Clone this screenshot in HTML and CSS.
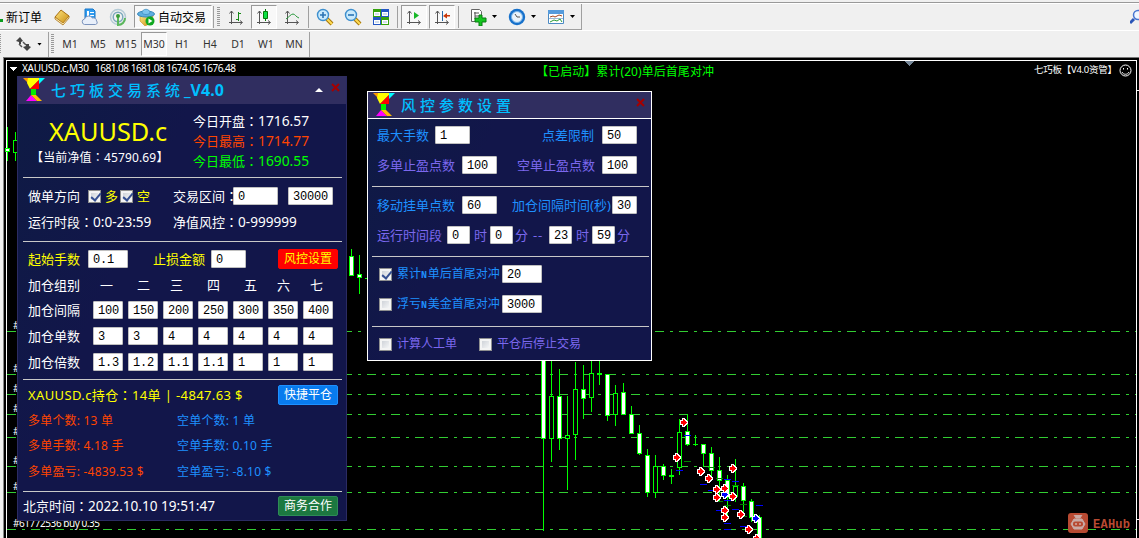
FILE: index.html
```
<!DOCTYPE html>
<html lang="zh-CN">

<head>
    <meta charset="UTF-8">
    <meta name="viewport" content="width=device-width, initial-scale=1.0">
    <title>七巧板交易系统</title>
    <link rel="stylesheet" href="styles.css">
</head>

<body>
    <svg width="0" height="0" class="defs">
        <defs>
            <symbol id="logo" viewBox="0 0 22 24">
                <path d="M0 0h5v5z" fill="#f90" />
                <path d="M5 0h11v2L7 11 4 5z" fill="#ff0" />
                <path d="M16 0h6l-6 6z" fill="#0ff" />
                <path d="M16 2v9H7z" fill="red" />
                <path d="M8 11h5v6H8z" fill="#0e0" />
                <path d="M8 17l6 6H3z" fill="#f0f" />
                <path d="M8 17h5l6 6h-5z" fill="#fb0" />
            </symbol>
            <symbol id="axes" viewBox="0 0 18 18">
                <path d="M4.500 3v13M2 14.500h13M2.500 5.500l2-2.500 2 2.500M13 12.500l2.500 2-2.500 2" fill="none" stroke="#555" />
            </symbol>
            <symbol id="arrow" viewBox="0 0 9 9" overflow="visible">
                <path d="M1 3h2V1h1v1h1v1h1v1h1v1H6v1H5v1H4v1H3V6H1z" stroke="#fff" stroke-width="2" />
                <path d="M1 3h2V1h1v1h1v1h1v1h1v1H6v1H5v1H4v1H3V6H1z" />
            </symbol>
            <linearGradient id="gold" x2="1" y2="1">
                <stop stop-color="#ffe680" />
                <stop offset="1" stop-color="#c78a10" />
            </linearGradient>
        </defs>
    </svg>

    <header class="toolbars">
        <div class="toolbar main-bar">
            <span class="new-order"><i></i>新订单</span>
            <span class="slot"><svg width="18" height="18"><path d="M2 9l6-7 8 6-6 8z" fill="url(#gold)" stroke="#a86f10" /><path d="M2 9v2l8 6 6-7V8l-6 7z" fill="#fff0b8" stroke="#a86f10" stroke-width=".8" /></svg></span>
            <span class="slot"><svg width="18" height="18"><path d="M4 1h8l2 2v9H4z" fill="#2f9cf0" stroke="#1976c8" /><path d="M6 3h2v7H6zM9 4h4v1H9zM9 7h4v1H9z" fill="#fff" /><path d="M3.500 16.500a2.800 2.800 0 0 1 0-5.500 4.500 4.500 0 0 1 8-1 3 3 0 0 1 4 3 2 2 0 0 1-1 3.500z" fill="#e8effa" stroke="#7b93bd" /></svg></span>
            <span class="slot"><svg width="18" height="18" fill="none"><circle cx="9" cy="9" r="7.500" stroke="#b5cbd6" stroke-width="1.500" /><circle cx="9" cy="9" r="4.800" stroke="#7ba8bd" stroke-width="1.500" /><path d="M9 8v9c4 0 7-3 7-7" stroke="#5cb85c" stroke-width="2" /><circle cx="9" cy="8" r="2" fill="#3a9c3a" /></svg></span>
            <span class="auto pressed"><svg width="18" height="18"><path d="M3 8h13l-2 7-6 3-5-5z" fill="url(#gold)" stroke="#c89520" stroke-width=".6" /><ellipse cx="9" cy="6" rx="8.500" ry="3" fill="#5eaee0" stroke="#3989ba" /><path d="M5 5c0-5 8-5 8 0-2 2-6 2-8 0z" fill="#7cc4ef" stroke="#3989ba" stroke-width=".7" /><circle cx="13" cy="13" r="4.500" fill="#10a820" /><path d="M11.500 10.500v5l4-2.500z" fill="#fff" /></svg>自动交易</span>
            <span class="sep"></span><span class="grip"></span>
            <span class="slot"><svg width="18" height="18"><use href="#axes" /><path d="M11.500 4v9M9 11.500h2M12 5.500h2" stroke="#178a17" /></svg></span>
            <span class="slot pressed"><svg width="18" height="18"><use href="#axes" /><path d="M10.500 1v12" stroke="#087a08" /><path d="M8.500 3.500h4v7h-4z" fill="#0be043" stroke="#087a08" /></svg></span>
            <span class="slot"><svg width="18" height="18"><use href="#axes" /><path d="M3 11c3-2 5-5 7-5s3 3 6 4" fill="none" stroke="#28983c" /></svg></span>
            <span class="sep"></span>
            <span class="slot"><svg width="18" height="18"><path d="M11 11l5 5" stroke="#a97809" stroke-width="4" /><path d="M11 11l5 5" stroke="#ffdc54" stroke-width="2" /><circle cx="7" cy="7" r="5.500" fill="#c9eafc" stroke="#3e8fce" stroke-width="1.400" /><path d="M4 7h6M7 4v6" stroke="#2b74b4" stroke-width="1.600" /></svg></span>
            <span class="slot"><svg width="18" height="18"><path d="M11 11l5 5" stroke="#a97809" stroke-width="4" /><path d="M11 11l5 5" stroke="#ffdc54" stroke-width="2" /><circle cx="7" cy="7" r="5.500" fill="#c9eafc" stroke="#3e8fce" stroke-width="1.400" /><path d="M4 7h6" stroke="#2b74b4" stroke-width="1.600" /></svg></span>
            <span class="slot"><svg width="18" height="18"><path d="M1 1h8v8H1zM9 9h8v8H9z" fill="#36a30e" /><path d="M9 1h8v8H9zM1 9h8v8H1z" fill="#2457c4" /><path d="M2 4h6v4H2zM10 4h6v4h-6zM2 12h6v4H2zM10 12h6v4h-6z" fill="#fff" /><path d="M3 6h4M11 6h4M3 14h4M11 14h4" stroke="#a4bddb" /></svg></span>
            <span class="sep"></span>
            <span class="slot pressed"><svg width="18" height="18"><use href="#axes" /><path d="M9 4v7l5-3.500z" fill="#18b828" /></svg></span>
            <span class="slot pressed"><svg width="18" height="18"><use href="#axes" /><path d="M9.500 3v10" stroke="#2467a8" /><path d="M10 8l4-3v2h3v1.500h-3v2z" fill="#c8370a" /></svg></span>
            <span class="sep"></span>
            <span class="slot menu"><svg width="18" height="18"><path d="M2.500 1.500h8l2 2v10h-10z" fill="#fff" stroke="#666" /><path d="M5 5h5M6 8h4M6 4v7" stroke="#555" /><path d="M10 7h3v3h4v4h-4v4h-3v-4H6v-4h4z" fill="#15c51f" stroke="#087a13" /></svg></span><i class="down"></i>
            <span class="slot"><svg width="18" height="18"><circle cx="9" cy="9" r="8.200" fill="#1771cb" /><circle cx="9" cy="9" r="5.500" fill="#e9f3fb" stroke="#78b4ea" /><path d="M7 6l2 3h3" fill="none" stroke="#555" /></svg></span><i class="down"></i>
            <span class="slot"><svg width="18" height="18"><path d="M1.500 2.500h15v13h-15z" fill="#fff" stroke="#4c8ac3" /><path d="M1 2h16v4H1z" fill="#559bdc" /><path d="M3 9l3-1 2 1 4-2 3 1" fill="none" stroke="#a5441d" /><path d="M2 10.500h14" stroke="#9dbbd5" /><path d="M3 14l4-2 3 1 3-2 2 3" fill="none" stroke="#2c9c36" /></svg></span><i class="down"></i>
            <svg class="search" width="9" height="16"><path d="M0 14l4-4" stroke="#2a55b8" stroke-width="3" /><circle cx="8" cy="6" r="4.500" fill="#eef6ff" stroke="#4775d1" stroke-width="1.500" /></svg>
        </div>
        <div class="toolbar period-bar">
            <span class="grip first"></span>
            <svg class="cursor" width="18" height="16"><path d="M1 5l4-4 3 4-2 1v2H4V6zM8 11l4 4 4-4-2-1V8h-3v2z" fill="#444" /><path d="M4 8l3 3M8 6l3 3" stroke="#555" stroke-width="1.500" /></svg><i class="down"></i>
            <span class="sep"></span><span class="grip"></span>
            <span class="slot">M1</span><span class="slot">M5</span><span class="slot">M15</span><span class="slot pressed">M30</span><span class="slot">H1</span><span class="slot">H4</span><span class="slot">D1</span><span class="slot">W1</span><span class="slot">MN</span>
            <span class="sep last"></span>
        </div>
    </header>

    <main class="workspace">
        <svg id="chart" class="chart" width="1139" height="481" viewBox="0 57 1139 481" shape-rendering="crispEdges">
            <rect x="3" y="57" width="1136" height="1" fill="#777" />
            <rect x="4" y="58" width="1135" height="480" />
            <rect x="3" y="58" width="1" height="480" fill="#888" />
            <path d="M6.500 538V60.500H1136.500V538M1137 90.500h2M1137 519.500h2" stroke="#fff" fill="none" />
            <g id="levels"></g>
            <g id="candles"></g>
            <g id="trades"></g>
            <path d="M904 61h10l-5 5z" fill="#778899" />
            <path d="M9 67h8l-4 4z" fill="#fff" />
            <g class="chart-text" shape-rendering="auto">
                <text x="22" y="72" textLength="67">XAUUSD.c,M30</text>
                <text x="95" y="72" textLength="141">1681.08 1681.08 1674.05 1676.48</text>
                <text x="13" y="527" textLength="87">#61772536 buy 0.35</text>
                <text x="1034" y="73" textLength="83" class="expert">七巧板【V4.0资管】</text>
                <text x="536" y="76" textLength="178" class="running">【已启动】累计(20)单后首尾对冲</text>
                <g fill="none" stroke="#fff"><circle cx="1125.500" cy="70.500" r="5.500" /><path d="M1122 72c1 3 6 3 7 0M1123.500 68v1.500M1127.500 68v1.500" /></g>
            </g>
            <g shape-rendering="auto">
                <rect x="1068" y="513" width="20" height="20" rx="3" fill="#b84a32" />
                <path d="M1074 515l2 3h4l2-3M1071 524l3-5h8l3 5-3 5h-8z" fill="#c9aaa5" stroke="#c9aaa5" />
                <rect x="1073" y="521.500" width="10" height="5" rx="2" fill="#b84a32" />
                <path d="M1076 523v2M1080 523v2" stroke="#ddd" />
                <text x="1093" y="528" textLength="37" class="brand">EAHub</text>
            </g>
        </svg>

        <section class="panel trade">
            <div class="panel-head">
                <svg width="22" height="24"><use href="#logo" /></svg>
                <h2>七巧板交易系统<b>_V4.0</b></h2>
                <i class="up"></i>
                <svg class="close" width="9" height="9"><path d="M1 1l7 7M8 1L1 8" /></svg>
            </div>
            <div class="summary">
                <div class="symbol">
                    <div class="name">XAUUSD.c</div>
                    <div class="equity">【当前净值<i class="colon" lang="zh-TW">：</i>45790.69】</div>
                </div>
                <div class="prices">
                    <p>今日开盘<i class="colon" lang="zh-TW">：</i><b>1716.57</b></p>
                    <p class="orange">今日最高<i class="colon" lang="zh-TW">：</i><b>1714.77</b></p>
                    <p class="lime">今日最低<i class="colon" lang="zh-TW">：</i><b>1690.55</b></p>
                </div>
            </div>
            <div class="group g1">
                <div class="row direction"><span>做单方向</span><i class="check on"></i><span class="yellow">多</span><i class="check on"></i><span class="yellow">空</span><span>交易区间<i class="colon" lang="zh-TW">：</i></span><input value="0"><input value="30000"></div>
                <div class="row times"><span>运行时段<i class="colon" lang="zh-TW">：</i><b>0:0-23:59</b></span><span>净值风控<i class="colon" lang="zh-TW">：</i><b>0-999999</b></span></div>
            </div>
            <div class="group g2">
                <div class="row start"><span class="yellow">起始手数</span><input value="0.1"><span class="yellow">止损金额</span><input value="0"><button class="red">风控设置</button></div>
                <div class="row steps heads"><span>加仓组别</span><em>一</em><em>二</em><em>三</em><em>四</em><em>五</em><em>六</em><em>七</em></div>
                <div class="row steps"><span>加仓间隔</span><input value="100"><input value="150"><input value="200"><input value="250"><input value="300"><input value="350"><input value="400"></div>
                <div class="row steps"><span>加仓单数</span><input value="3"><input value="3"><input value="4"><input value="4"><input value="4"><input value="4"><input value="4"></div>
                <div class="row steps"><span>加仓倍数</span><input value="1.3"><input value="1.2"><input value="1.1"><input value="1.1"><input value="1"><input value="1"><input value="1"></div>
            </div>
            <div class="group g3">
                <div class="row position"><span class="yellow">XAUUSD.c持仓<i class="colon" lang="zh-TW">：</i>14单 | -4847.63 $</span><button class="blue">快捷平仓</button></div>
                <div class="row pair"><span>多单个数: 13 单</span><span>空单个数: 1 单</span></div>
                <div class="row pair"><span>多单手数: 4.18 手</span><span>空单手数: 0.10 手</span></div>
                <div class="row pair"><span>多单盈亏: -4839.53 $</span><span>空单盈亏: -8.10 $</span></div>
            </div>
            <div class="group g4">
                <div class="row clock"><span>北京时间<i class="colon" lang="zh-TW">：</i><b>2022.10.10 19:51:47</b></span><button class="green">商务合作</button></div>
            </div>
        </section>

        <section class="panel risk">
            <div class="panel-head">
                <svg width="22" height="24"><use href="#logo" /></svg>
                <h2>风控参数设置</h2>
                <svg class="close" width="9" height="9"><path d="M1 1l7 7M8 1L1 8" /></svg>
            </div>
            <div class="group">
                <div class="row r1"><span>最大手数</span><input value="1"><span>点差限制</span><input value="50"></div>
                <div class="row r2 violet"><span>多单止盈点数</span><input value="100"><span>空单止盈点数</span><input value="100"></div>
            </div>
            <div class="group">
                <div class="row r3"><span>移动挂单点数</span><input value="60"><span>加仓间隔时间(秒)</span><input value="30"></div>
                <div class="row r4 violet"><span>运行时间段</span><input value="0"><span>时</span><input value="0"><span class="dash">分 --</span><input value="23"><span>时</span><input value="59"><span>分</span></div>
            </div>
            <div class="group opts">
                <div class="row r5"><i class="check on"></i><span>累计<small>N</small>单后首尾对冲</span><input value="20"></div>
                <div class="row r5"><i class="check"></i><span>浮亏<small>N</small>美金首尾对冲</span><input value="3000"></div>
            </div>
            <div class="group last">
                <div class="row r6 violet"><i class="check"></i><span>计算人工单</span><i class="check"></i><span>平仓后停止交易</span></div>
            </div>
        </section>
    </main>

    <script src="chart.js"></script>
</body>

</html>
```
FILE: styles.css
```
* {
    box-sizing: border-box;
}

body {
    margin: 0;
    width: 1139px;
    height: 538px;
    overflow: hidden;
    background: #f0f0f0;
    font-family: "Noto Sans", "Noto Sans CJK SC", sans-serif;
}

i, em, b {
    font-style: normal;
    font-weight: normal;
}

svg {
    display: block;
    flex: none;
}

.defs {
    position: absolute;
}

/* 工具栏 */
.toolbars {
    height: 57px;
    padding-top: 2px;
}

.toolbar {
    display: flex;
    align-items: center;
}

.main-bar {
    height: 29px;
    border-top: 1px solid #999;
    border-bottom: 1px solid #fff;
    box-shadow: inset 0 1px #fff;
    background: linear-gradient(#a0a0a0, #a0a0a0) 0 26px / 581px 1px no-repeat, linear-gradient(#a0a0a0, #a0a0a0) 581px 1px / 1px 26px no-repeat;
}

.period-bar {
    height: 26px;
    font-size: 10.5px;
    color: #333;
}

.slot {
    width: 28px;
    height: 24px;
    flex: none;
    display: flex;
    align-items: center;
    justify-content: center;
}

.pressed {
    background: #f8f8f8;
    border: 1px solid #fff;
    border-top-color: #999;
    border-left-color: #999;
}

.slot.pressed {
    width: 26px;
    margin: 0 1px;
}

.new-order {
    width: 48px;
    display: flex;
    align-items: center;
    font-size: 12px;
    white-space: nowrap;
}

.new-order i {
    width: 3px;
    height: 3px;
    margin: 8px 3px 0 0;
    background: #0a9c1c;
}

.auto {
    width: 78px;
    height: 23px;
    margin: 0 0 0 2px;
    padding-left: 2px;
    display: flex;
    align-items: center;
    gap: 3px;
    font-size: 12px;
    white-space: nowrap;
}

.sep {
    width: 1px;
    height: 22px;
    margin: 0 2px;
    background: #a0a0a0;
}

.grip {
    width: 3px;
    height: 20px;
    margin-right: 4px;
    background: repeating-linear-gradient(#999 0 1px, #f0f0f0 1px 2px);
}

.main-bar .slot + .sep {
    margin: 0 2px 0 2px;
}

.main-bar .auto + .sep {
    margin: 0 3px 0 1px;
}

.main-bar .grip {
    margin-right: 2px;
}

.slot.menu {
    margin-left: 3px;
}

.down {
    width: 5px;
    height: 3px;
    flex: none;
    margin-right: 5px;
    background: #000;
    clip-path: polygon(0 0, 100% 0, 50% 100%);
}

.main-bar .down {
    margin: 0 6px 0 0;
}

.search {
    margin-left: auto;
}

.grip.first {
    width: 1px;
    margin: 0;
}

.cursor {
    margin: 0 4px 0 14px;
}

.period-bar .sep {
    height: 25px;
    margin: 0 2px 0 1px;
}

.period-bar .grip:not(.first) {
    margin-right: 2px;
}

.period-bar .sep.last {
    margin-left: 1px;
}

/* 图表 */
.workspace {
    position: relative;
    height: 481px;
}

.chart-text text {
    font-size: 10px;
    fill: #fff;
}

.chart-text .running {
    font-size: 12px;
    fill: #0f0;
}

.chart-text .expert {
    font-size: 9.5px;
}

.brand {
    font: bold 12px "Liberation Mono", monospace;
    fill: #b84a32;
}

/* 浮动面板 */
.panel {
    position: absolute;
    color: #fff;
    font-size: 13px;
    line-height: 20px;
    background: linear-gradient(115deg, #0e1b44, #12164a 35%);
}

.trade {
    left: 17px;
    top: 19px;
    width: 330px;
    height: 445px;
    border: 1px solid #2b2b62;
    border-top: 0;
}

.risk {
    left: 367px;
    top: 34px;
    width: 285px;
    height: 270px;
    border: 1px solid #fff;
    color: #1e90ff;
}

.panel-head {
    display: flex;
    align-items: center;
    height: 28px;
    padding-left: 5px;
    background: #302e60;
}

.panel-head h2 {
    flex: 1;
    margin: 0 0 0 6px;
    font-size: 15px;
    line-height: 20px;
    letter-spacing: 4px;
    font-weight: 500;
    color: #00bfff;
    white-space: nowrap;
}

.panel-head b {
    font-size: 16px;
    font-weight: bold;
    letter-spacing: 0;
}

.up {
    width: 8px;
    height: 4px;
    margin-right: 8px;
    background: #fff;
    clip-path: polygon(50% 0, 100% 100%, 0 100%);
}

.close {
    margin: 0 6px 5px 0;
    fill: none;
    stroke: #a40000;
    stroke-width: 2;
}

.risk .panel-head {
    height: 27px;
    border-bottom: 1px solid #fff;
}

/* 冒号居中 */
.colon {
    font-family: "Noto Sans CJK TC", sans-serif;
    line-height: 1;
}

.summary {
    display: flex;
    height: 74px;
    margin: 0 4px 0 5px;
    border-bottom: 1px solid #c8c8c8;
}

.symbol {
    width: 170px;
}

.name {
    margin: 13px 0 0 26px;
    font-size: 25.3px;
    line-height: 28px;
    color: #ff0;
}

.equity {
    margin: 3px 0 0 8px;
    font-size: 12px;
    letter-spacing: 0.15px;
    white-space: nowrap;
}

.prices {
    padding-top: 7px;
}

.prices p {
    margin: 0;
    height: 20px;
}

.row b {
    font-size: 13.6px;
}

.prices b {
    font-size: 13.8px;
}

.orange {
    color: #ff4500;
}

.lime {
    color: #0f0;
}

.yellow {
    color: #ff0;
}

.violet {
    color: #7b68ee;
}

.group {
    margin: 0 4px 0 5px;
    border-bottom: 1px solid #c8c8c8;
}

.row {
    display: grid;
    align-items: center;
    height: 26px;
    padding-left: 5px;
    white-space: nowrap;
}

.g1 {
    height: 64px;
    padding-top: 5px;
}

.g2 {
    height: 138px;
    padding-top: 4px;
}

.g3 {
    height: 112px;
    padding-top: 2px;
}

.g4 {
    border: 0;
    padding-top: 1px;
}

.direction {
    grid-template-columns: 60px 17px 15px 17px 36px 60px 55px 45px;
}

.times {
    grid-template-columns: 145px auto;
}

.start {
    grid-template-columns: 60px 65px 58px 67px 60px;
}

.start input {
    width: 40px;
}

.start input:nth-of-type(2) {
    width: 35px;
}

.steps {
    grid-template-columns: 65px repeat(7, 35px);
}

.steps.heads {
    height: 25px;
    grid-template-columns: 65px 37px 33px 37px 37px 33px 33px 35px;
}

.steps em {
    padding-left: 7px;
}

.steps input {
    width: 30px;
}

.position {
    grid-template-columns: 250px 60px;
}

.position span {
    letter-spacing: 0.38px;
}

.pair {
    grid-template-columns: 149px auto;
    font-size: 12px;
    letter-spacing: 0.2px;
}

.position + .pair {
    height: 25px;
}

.pair span:first-child {
    color: #ff4500;
}

.pair span:last-child {
    color: #1e90ff;
}

.clock {
    padding-left: 0;
    grid-template-columns: 255px 60px;
}

input {
    width: 35px;
    height: 18px;
    padding: 2px 0 0 4px;
    border: 1px solid #c0c0c0;
    border-radius: 1px;
    background: #fff;
    color: #000;
    font: 12px "Liberation Mono", monospace;
    letter-spacing: -0.2px;
}

.direction input {
    width: 45px;
}

button {
    width: 60px;
    height: 20px;
    padding: 0;
    border: 1px solid;
    border-radius: 2px;
    color: #fff;
    font: 12px/18px "Noto Sans", "Noto Sans CJK SC", sans-serif;
}

.red {
    background: #f00;
    border-color: #f00;
    color: #ff0;
}

.blue {
    background: #087bee;
    border-color: #1e90ff;
}

.green {
    background: #1c7840;
    border-color: #2e8b57;
}

.check {
    position: relative;
    width: 13px;
    height: 13px;
    border: 1px solid #8e8f8f;
    background: linear-gradient(135deg, #c4c9d0, #fff);
    box-shadow: inset 0 0 0 2px #f4f4f4;
}

.check.on::after {
    content: "";
    position: absolute;
    left: 4px;
    top: 0;
    width: 4px;
    height: 8px;
    border: solid #354f91;
    border-width: 0 2px 2px 0;
    transform: rotate(40deg);
}

/* 风控面板 */
.risk .group {
    height: 68px;
    margin: 0 2px 0 4px;
    padding-top: 1px;
}

.risk .group + .group {
    height: 70px;
    padding-top: 3px;
}

.risk .group.opts {
    padding-top: 2px;
}

.risk .group.last {
    height: auto;
    border: 0;
    padding-top: 2px;
}

.risk .row {
    height: 30px;
}

.r1 {
    grid-template-columns: 58px 107px 60px 35px;
}

.r2 {
    grid-template-columns: 85px 55px 85px 35px;
}

.r3 {
    grid-template-columns: 85px 50px 100px 25px;
}

.r3 input:last-child {
    width: 25px;
}

.r4 {
    grid-template-columns: 70px 27px 16px 25px 34px 27px 16px 25px auto;
}

.r4 input {
    width: 23px;
}

.r4 .dash {
    letter-spacing: 0.8px;
}

.r5 {
    font-size: 12px;
    grid-template-columns: 18px 105px 40px;
}

.risk .r5, .risk .r6 {
    padding-left: 7px;
}

.r5 small {
    font: bold 10px "Liberation Mono", monospace;
    letter-spacing: 0.8px;
}

.r5 input {
    width: 40px;
}

.r6 {
    font-size: 12px;
    grid-template-columns: 18px 82px 18px auto;
}
```
FILE: chart.js
```
const NS = 'http://www.w3.org/2000/svg';

function add(parent, tag, attrs) {
    const el = document.createElementNS(NS, tag);
    for (const k in attrs) el.setAttribute(k, attrs[k]);
    document.getElementById(parent).appendChild(el);
    return el;
}

const levels = [331, 374, 394, 414, 437, 466, 492, 529];
levels.forEach(y => {
    add('levels', 'path', { d: `M7 ${y + 0.5}H1136`, stroke: '#32cd32', 'stroke-dasharray': '9 6 3 6' });
    if (y < 529) {
        const t = add('levels', 'text', { x: 13, y: y - 2, fill: '#fff', 'font-size': 10 });
        t.textContent = '#';
    }
});

// x, 最高, 最低, 实体上沿, 实体下沿, 是否阴线
const candles = [
    [7, 127, 161, 148, 152, 1], [15, 132, 161, 140, 153, 0],
    [351, 249, 276, 256, 276, 1], [359, 255, 294, 274, 278, 1], [367, 278, 279, 278, 279, 0],
    [543, 360, 531, 360, 439, 1], [551, 360, 462, 396, 439, 0], [559, 369, 450, 396, 439, 1],
    [567, 396, 490, 435, 439, 0], [575, 362, 460, 389, 435, 0], [583, 365, 419, 389, 399, 1],
    [591, 360, 412, 373, 398, 0], [599, 360, 385, 373, 375, 0], [607, 374, 421, 374, 416, 1],
    [615, 385, 426, 393, 415, 0], [623, 383, 415, 392, 415, 1], [631, 406, 434, 414, 434, 1],
    [639, 425, 455, 433, 454, 1], [647, 449, 497, 455, 493, 1], [655, 455, 498, 466, 493, 0],
    [663, 464, 480, 466, 476, 1], [671, 469, 484, 475, 477, 0], [679, 419, 475, 432, 468, 0],
    [687, 414, 446, 431, 445, 1], [695, 435, 446, 444, 445, 0], [703, 444, 467, 444, 454, 1],
    [711, 447, 478, 453, 471, 1], [719, 457, 502, 470, 481, 1], [727, 475, 515, 480, 498, 1],
    [735, 459, 502, 486, 497, 0], [743, 483, 515, 486, 501, 1], [751, 499, 522, 501, 518, 1],
    [759, 515, 540, 517, 540, 1]
];
candles.forEach(([x, high, low, top, bottom, down]) => {
    add('candles', 'rect', { x: x, y: high, width: 1, height: low - high, fill: '#0f0' });
    add('candles', 'rect', { x: x - 2, y: top, width: 5, height: bottom - top, fill: '#0f0' });
    if (bottom - top > 2) {
        add('candles', 'rect', { x: x - 1, y: top + 1, width: 3, height: bottom - top - 2, fill: down ? '#fff' : '#000' });
    }
});

const marks = {
    '#00f': [[679, 470], [687, 435], [703, 484], [711, 490], [727, 479], [735, 481], [727, 500], [719, 510], [735, 509], [727, 523], [727, 529], [759, 505], [743, 526]],
    '#008000': [[687, 461], [711, 467], [719, 478], [719, 501], [727, 505], [735, 485], [743, 504], [743, 516]]
};
for (const color in marks) {
    marks[color].forEach(([x, y]) => add('trades', 'rect', { x: x - 3, y: y, width: 7, height: 1, fill: color }));
}

const orders = [
    [725, 494, 'blue'], [684, 422], [677, 457], [701, 471], [709, 478], [717, 489], [725, 488], [717, 497], [733, 468],
    [733, 496], [725, 510], [725, 517], [741, 514], [749, 529], [757, 538], [756, 518, 'blue']
];
orders.forEach(([x, y, color]) => {
    add('trades', 'use', { href: '#arrow', x: x - 4, y: y - 4, width: 9, height: 9, fill: color || 'red' });
});
```
